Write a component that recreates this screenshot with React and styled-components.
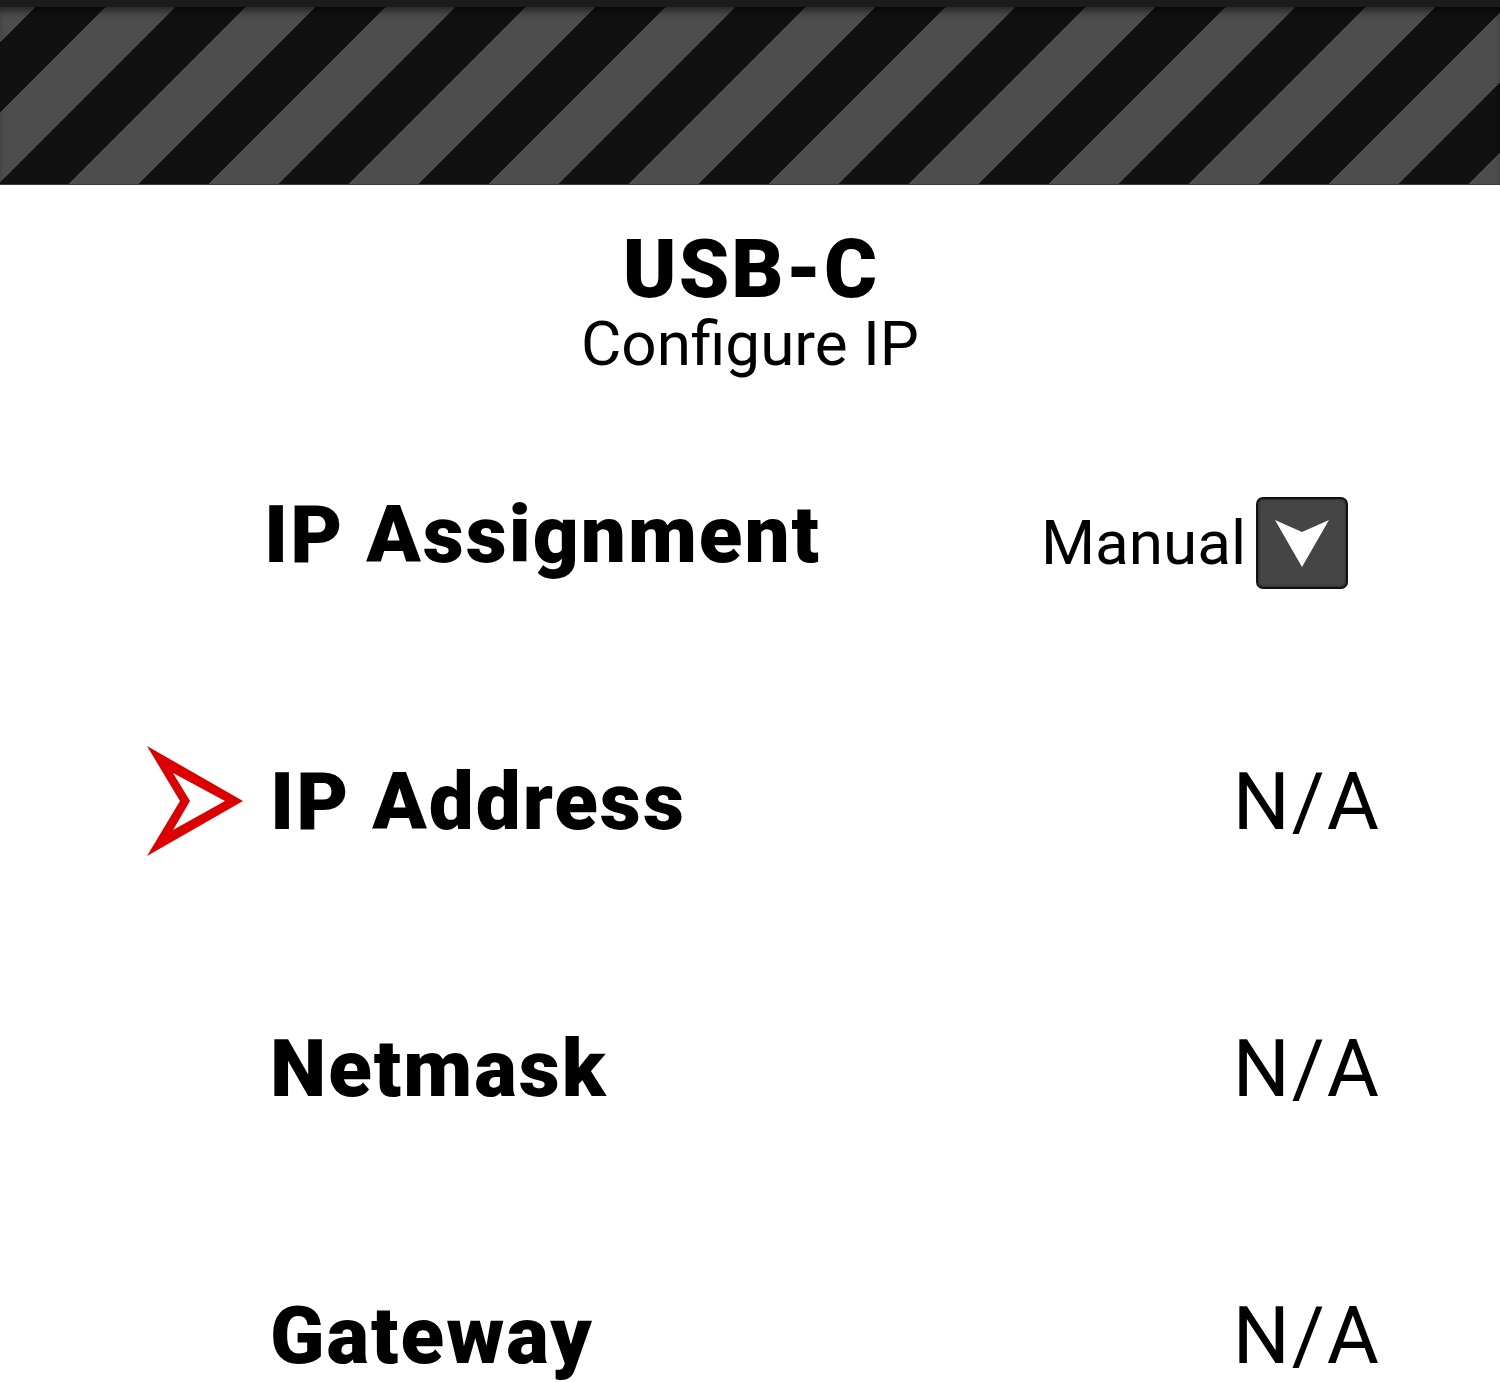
import React from "react";
import styled, { createGlobalStyle } from "styled-components";

const GlobalStyle = createGlobalStyle`
  html, body { margin: 0; padding: 0; background: #ffffff; }
  body { font-family: Roboto, "Noto Sans", "Liberation Sans", sans-serif; color: #000; }
`;

const Page = styled.div`
  width: 1500px;
  height: 1382px;
  overflow: hidden;
  background: #fff;
`;

const HazardBar = styled.header`
  height: 177px;
  border-top: 7px solid #1c1c1c;
  border-bottom: 1px solid #3c3c3c;
  background: repeating-linear-gradient(
    135deg,
    #4d4d4d 0 24.75px,
    #111111 24.75px 74.25px,
    #4d4d4d 74.25px 99px
  );
  box-shadow: inset 0 8px 8px -4px rgba(0, 0, 0, 0.55);
`;

const TitleBlock = styled.div`
  padding-top: 44px;
  text-align: center;
`;

const Title = styled.h1`
  margin: 0;
  font-size: 81px;
  line-height: 1;
  font-weight: 900;
  letter-spacing: 2px;
  padding-left: 2px;
`;

const Subtitle = styled.h2`
  margin: 3px 0 0;
  font-size: 62px;
  line-height: 1;
  font-weight: 400;
`;

const List = styled.div`
  margin-top: 26px;
  display: flex;
  flex-direction: column;
`;

const Row = styled.div`
  height: 267px;
  display: grid;
  grid-template-columns: 270px 1fr auto;
  align-items: center;
  padding-right: ${(p) => p.$right}px;
`;

const Marker = styled.div`
  display: flex;
  align-items: center;
  padding-left: 147px;
`;

const Label = styled.div`
  font-size: 80px;
  font-weight: 900;
  line-height: 1;
  letter-spacing: 2px;
  margin-left: ${(p) => p.$shift}px;
`;

const Value = styled.div`
  font-size: 80px;
  font-weight: 400;
  line-height: 1;
  letter-spacing: 2px;
`;

const SelectWrap = styled.div`
  display: flex;
  align-items: center;
  gap: 10px;
  margin-top: 16px;
`;

const SelectText = styled.span`
  font-size: 62px;
  line-height: 1;
  font-weight: 400;
`;

const DropButton = styled.div`
  width: 88px;
  height: 88px;
  box-sizing: content-box;
  border: 2px solid #121212;
  border-radius: 7px;
  background: #454545;
  box-shadow: inset 0 0 3px rgba(0, 0, 0, 0.6);
  display: flex;
  align-items: center;
  justify-content: center;
`;

const Pointer = () => (
  <svg width="98" height="112" viewBox="0 0 98 112">
    <path
      fillRule="evenodd"
      fill="#dd0000"
      d="M0 0 L96 55 L0 110 L33 55 Z M26 27 L78 55 L26 84 L43 55 Z"
    />
  </svg>
);

const DownArrow = () => (
  <svg width="58" height="52" viewBox="0 0 58 52">
    <path fill="#ffffff" d="M2 3 L29 15 L56 3 L29 50 Z" />
  </svg>
);

const rows = [
  { label: "IP Address", value: "N/A", active: true },
  { label: "Netmask", value: "N/A" },
  { label: "Gateway", value: "N/A" },
];

export default function App() {
  return (
    <Page>
      <GlobalStyle />
      <HazardBar />
      <TitleBlock>
        <Title>USB-C</Title>
        <Subtitle>Configure IP</Subtitle>
      </TitleBlock>
      <List>
        <Row $right={152}>
          <Marker />
          <Label $shift={-6}>IP Assignment</Label>
          <SelectWrap>
            <SelectText>Manual</SelectText>
            <DropButton>
              <DownArrow />
            </DropButton>
          </SelectWrap>
        </Row>
        {rows.map((r) => (
          <Row key={r.label} $right={119}>
            <Marker>{r.active && <Pointer />}</Marker>
            <Label $shift={0}>{r.label}</Label>
            <Value>{r.value}</Value>
          </Row>
        ))}
      </List>
    </Page>
  );
}
